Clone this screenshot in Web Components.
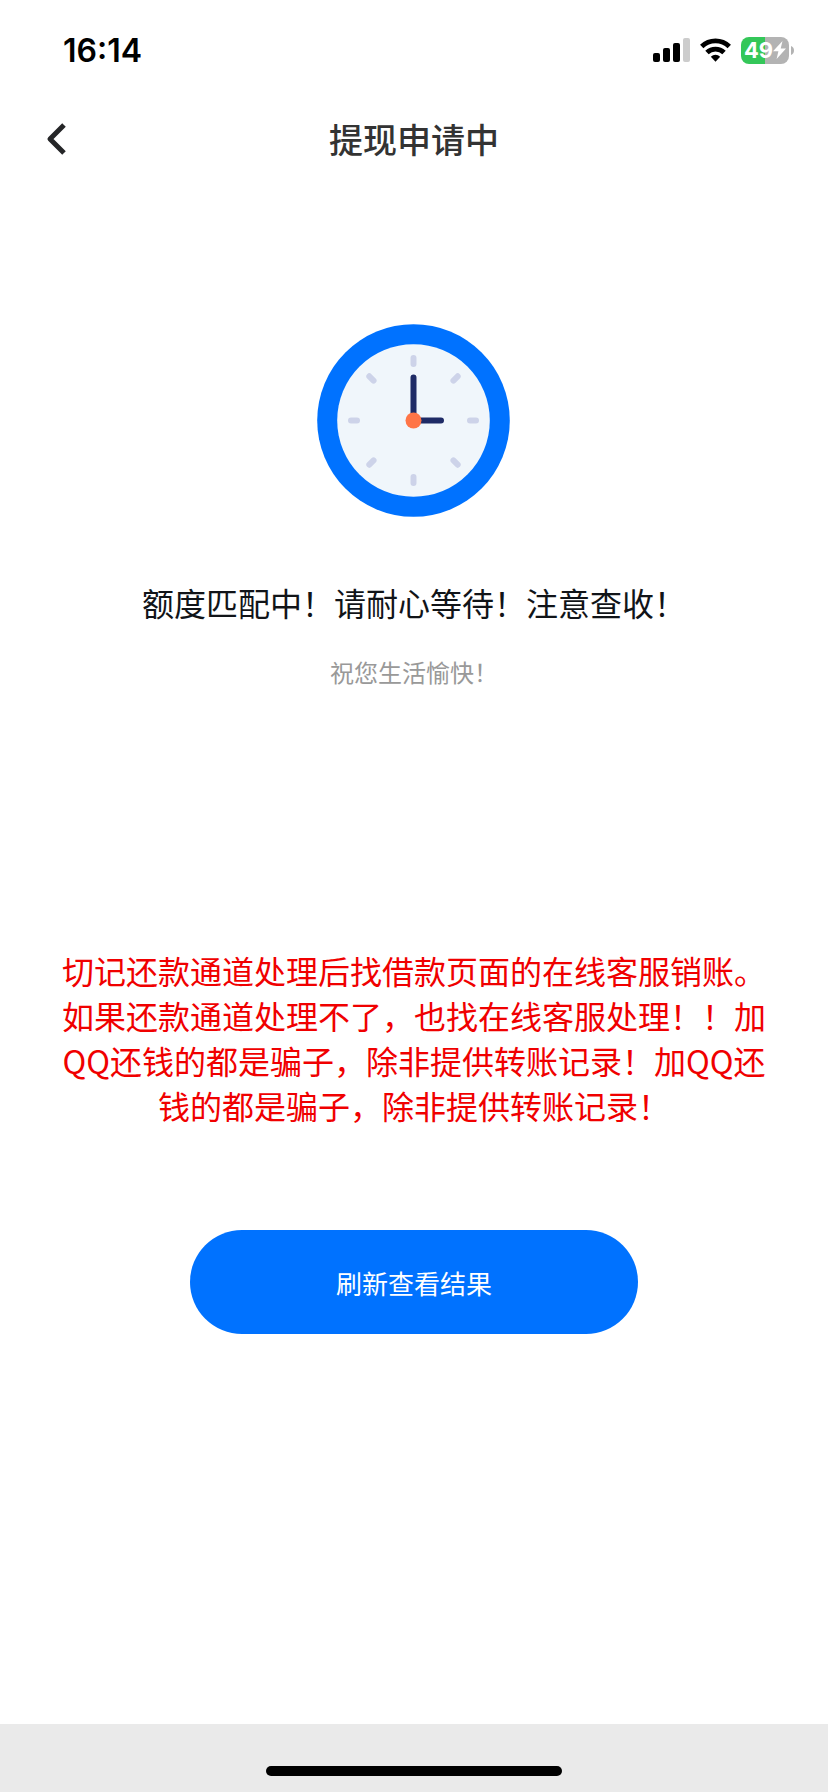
<!DOCTYPE html>
<html lang="zh-CN">
<head>
<meta charset="utf-8">
<meta name="viewport" content="width=device-width, initial-scale=1">
<title>提现申请中</title>
<style>
  body {
    --blue: #0072ff;
    margin: 0;
    background: #fff;
    color: #111418;
    font-family: "Noto Sans CJK SC", sans-serif;
    text-spacing-trim: space-all;
  }
</style>
</head>
<body>
<withdraw-page>
  <status-bar slot="top" time="16:14" battery="49"></status-bar>
  <nav-header slot="top">提现申请中</nav-header>
  <status-result>
    <clock-icon slot="icon"></clock-icon>
    额度匹配中！请耐心等待！注意查收！
    <span slot="note">祝您生活愉快！</span>
  </status-result>
  <warning-text>切记还款通道处理后找借款页面的在线客服销账。如果还款通道处理不了，也找在线客服处理！！加QQ还钱的都是骗子，除非提供转账记录！加QQ还钱的都是骗子，除非提供转账记录！</warning-text>
  <pill-button>刷新查看结果</pill-button>
  <home-indicator slot="bottom"></home-indicator>
</withdraw-page>

<script>
class WithdrawPage extends HTMLElement {
  constructor() {
    super();
    this.attachShadow({ mode: "open" }).innerHTML = `
      <style>
        :host {
          display: flex;
          flex-direction: column;
          min-height: 100vh;
        }
        main {
          flex: 1;
          display: flex;
          flex-direction: column;
          align-items: center;
          padding: 146px 54px 40px;
        }
      </style>
      <slot name="top"></slot>
      <main><slot></slot></main>
      <slot name="bottom"></slot>
    `;
  }
}

class StatusBar extends HTMLElement {
  constructor() {
    super();
    this.attachShadow({ mode: "open" });
  }

  connectedCallback() {
    const time = this.getAttribute("time");
    const battery = this.getAttribute("battery");

    this.shadowRoot.innerHTML = `
      <style>
        :host {
          display: flex;
          justify-content: space-between;
          align-items: center;
          height: 100px;
          box-sizing: border-box;
          padding: 0 34px 0 63px;
          color: #000;
          font-family: Inter, sans-serif;
        }
        time {
          font-size: 32px;
          font-weight: 600;
        }
        .icons {
          display: flex;
          align-items: center;
          gap: 10px;
        }
        svg {
          display: block;
        }
        .battery {
          display: flex;
          align-items: center;
          gap: 2px;
        }
        .level {
          display: flex;
          align-items: center;
          justify-content: center;
          width: 48px;
          height: 27px;
          border-radius: 8px;
          background: linear-gradient(90deg, #34c759 50%, #b3b3b3 50%);
          background: linear-gradient(90deg, #34c759 ${battery}%, #b3b3b3 ${battery}%);
          color: #fff;
          font-size: 22px;
          font-weight: 700;
          line-height: 27px;
        }
      </style>
      <time>${time}</time>
      <div class="icons">
        <svg width="37" height="24" viewBox="0 0 37 24">
          <rect x="0" y="15" width="7" height="9" rx="2"/>
          <rect x="10" y="10" width="7" height="14" rx="2"/>
          <rect x="20" y="5" width="7" height="19" rx="2"/>
          <rect x="30" y="0" width="7" height="24" rx="2" fill="#ccc"/>
        </svg>
        <svg width="31" height="24" viewBox="0 0 32 24">
          <g fill="none" stroke="#000" stroke-width="5">
            <path d="M1.8 8.4a20.4 20.4 0 0 1 28.4 0"/>
            <path d="M7.2 14.6a12.6 12.6 0 0 1 17.6 0"/>
          </g>
          <path d="M16 24l-4.8-5a6.8 6.8 0 0 1 9.6 0z"/>
        </svg>
        <div class="battery">
          <div class="level">
            <span>${battery}</span>
            <svg width="13" height="18" viewBox="0 0 13 18" fill="#fff">
              <path d="M9.5 0L0 10.2h5.4L3.6 18 13 7.6H7.7z"/>
            </svg>
          </div>
          <svg width="3" height="9" viewBox="0 0 3 9"><path d="M0 0c4 1.5 4 7.5 0 9z" fill="#b3b3b3"/></svg>
        </div>
      </div>
    `;
  }
}

class NavHeader extends HTMLElement {
  constructor() {
    super();
    this.attachShadow({ mode: "open" }).innerHTML = `
      <style>
        :host {
          display: grid;
          grid-template-columns: 60px 1fr 60px;
          align-items: center;
          height: 78px;
          padding: 0 26px;
          color: #333;
        }
        button {
          display: flex;
          justify-content: center;
          padding: 20px 0;
          border: 0;
          background: none;
          color: #252628;
          cursor: pointer;
        }
        h1 {
          margin: 0;
          font-size: 34px;
          font-weight: 500;
          line-height: 48px;
          text-align: center;
        }
      </style>
      <button type="button" aria-label="返回">
        <svg width="20" height="32" viewBox="0 0 20 32" fill="none" stroke="currentColor" stroke-width="5" stroke-linejoin="round">
          <path d="M18 2L4 16l14 14"/>
        </svg>
      </button>
      <h1><slot></slot></h1>
    `;
    this.shadowRoot
      .querySelector("button")
      .addEventListener("click", () => history.back());
  }
}

class ClockIcon extends HTMLElement {
  constructor() {
    super();
    const ticks = [0, 45, 90, 135, 180, 225, 270, 315]
      .map((deg) => `<path d="M0-62.5v6" transform="rotate(${deg})"/>`)
      .join("");

    this.attachShadow({ mode: "open" }).innerHTML = `
      <style>
        :host {
          display: block;
        }
        svg {
          display: block;
        }
      </style>
      <svg width="193" height="193" viewBox="-96.5 -96.5 193 193" fill="none" stroke-width="6" stroke-linecap="round">
        <circle r="96.3" fill="#0072ff"/>
        <circle r="76.3" fill="#f0f6fb"/>
        <g stroke="#cdd3e9">${ticks}</g>
        <path d="M0-43V0H27.5" stroke="#1f2b66"/>
        <circle r="8" fill="#ff7547"/>
      </svg>
    `;
  }
}

class StatusResult extends HTMLElement {
  constructor() {
    super();
    this.attachShadow({ mode: "open" }).innerHTML = `
      <style>
        :host {
          display: flex;
          flex-direction: column;
          align-items: center;
          text-align: center;
        }
        h2 {
          margin: 61px 0 28px;
          font-size: 32px;
          font-weight: 400;
          line-height: 48px;
        }
        p {
          margin: 0;
          color: #999;
          font-size: 24px;
          line-height: 36px;
        }
      </style>
      <slot name="icon"></slot>
      <h2><slot></slot></h2>
      <p><slot name="note"></slot></p>
    `;
  }
}

class WarningText extends HTMLElement {
  constructor() {
    super();
    this.attachShadow({ mode: "open" }).innerHTML = `
      <style>
        :host {
          display: block;
          margin: 258px 0 102px;
          color: #f00000;
          font-size: 32px;
          line-height: 45px;
          text-align: center;
        }
      </style>
      <slot></slot>
    `;
  }
}

class PillButton extends HTMLElement {
  constructor() {
    super();
    this.attachShadow({ mode: "open" }).innerHTML = `
      <style>
        :host {
          display: block;
          width: 448px;
          max-width: 100%;
        }
        button {
          width: 100%;
          height: 104px;
          border: 0;
          border-radius: 52px;
          background: var(--blue);
          color: #fff;
          font: inherit;
          font-size: 26px;
          cursor: pointer;
        }
      </style>
      <button type="button"><slot></slot></button>
    `;
    this.shadowRoot
      .querySelector("button")
      .addEventListener("click", () => location.reload());
  }
}

class HomeIndicator extends HTMLElement {
  constructor() {
    super();
    this.attachShadow({ mode: "open" }).innerHTML = `
      <style>
        :host {
          display: flex;
          justify-content: center;
          align-items: flex-end;
          height: 68px;
          box-sizing: border-box;
          padding-bottom: 16px;
          background: #eaeaea;
        }
        div {
          width: 296px;
          height: 10px;
          border-radius: 5px;
          background: #000;
        }
      </style>
      <div></div>
    `;
  }
}

customElements.define("withdraw-page", WithdrawPage);
customElements.define("status-bar", StatusBar);
customElements.define("nav-header", NavHeader);
customElements.define("clock-icon", ClockIcon);
customElements.define("status-result", StatusResult);
customElements.define("warning-text", WarningText);
customElements.define("pill-button", PillButton);
customElements.define("home-indicator", HomeIndicator);
</script>
</body>
</html>
